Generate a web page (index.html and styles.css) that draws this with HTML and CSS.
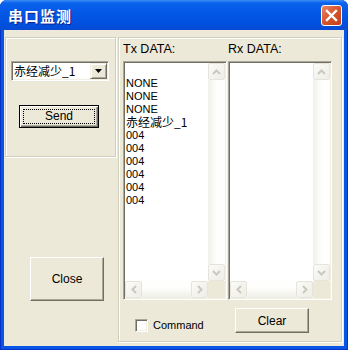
FILE: index.html
```html
<!DOCTYPE html>
<html lang="zh-CN">
<head>
    <meta charset="UTF-8">
    <title>串口监测</title>
    <link rel="stylesheet" href="styles.css">
</head>
<body>
    <div class="window">
        <div class="titlebar">
            <span class="title">串口监测</span>
            <span class="close-x">
                <svg width="19" height="19" viewBox="0 0 19 19"><path d="M5 5 L14 14 M14 5 L5 14" stroke="#fff" stroke-width="2.4" stroke-linecap="square"/></svg>
            </span>
        </div>
        <div class="client">
            <div class="left">
                <div class="group send-group">
                    <div class="combo">
                        <span class="combo-text">赤经减少_1</span>
                        <span class="combo-btn">
                            <svg width="7" height="4" viewBox="0 0 7 4"><path d="M0 0 H7 L3.5 4 Z" fill="#000"/></svg>
                        </span>
                    </div>
                    <button class="btn btn-default btn-send"><span class="focus">Send</span></button>
                </div>
                <button class="btn btn-close">Close</button>
            </div>
            <div class="group data-group">
                <div class="lists">
                    <div class="col">
                        <div class="label">Tx DATA:</div>
                        <div class="listbox">
                            <div class="items">
                                <div class="item">&nbsp;</div>
                                <div class="item">NONE</div>
                                <div class="item">NONE</div>
                                <div class="item">NONE</div>
                                <div class="item cjk">赤经减少_1</div>
                                <div class="item">004</div>
                                <div class="item">004</div>
                                <div class="item">004</div>
                                <div class="item">004</div>
                                <div class="item">004</div>
                                <div class="item">004</div>
                            </div>
                            <div class="vscroll">
                                <span class="sbtn"><svg width="9" height="6" viewBox="0 0 9 6"><path d="M1 5 L4.5 1.5 L8 5" fill="none" stroke="#cbc9bd" stroke-width="2"/></svg></span>
                                <span class="vtrack"></span>
                                <span class="sbtn"><svg width="9" height="6" viewBox="0 0 9 6"><path d="M1 1 L4.5 4.5 L8 1" fill="none" stroke="#cbc9bd" stroke-width="2"/></svg></span>
                            </div>
                            <div class="hscroll">
                                <span class="sbtn"><svg width="6" height="9" viewBox="0 0 6 9"><path d="M5 1 L1.5 4.5 L5 8" fill="none" stroke="#cbc9bd" stroke-width="2"/></svg></span>
                                <span class="htrack"></span>
                                <span class="sbtn"><svg width="6" height="9" viewBox="0 0 6 9"><path d="M1 1 L4.5 4.5 L1 8" fill="none" stroke="#cbc9bd" stroke-width="2"/></svg></span>
                            </div>
                            <div class="corner"></div>
                        </div>
                    </div>
                    <div class="col">
                        <div class="label">Rx DATA:</div>
                        <div class="listbox">
                            <div class="items"></div>
                            <div class="vscroll">
                                <span class="sbtn"><svg width="9" height="6" viewBox="0 0 9 6"><path d="M1 5 L4.5 1.5 L8 5" fill="none" stroke="#cbc9bd" stroke-width="2"/></svg></span>
                                <span class="vtrack"></span>
                                <span class="sbtn"><svg width="9" height="6" viewBox="0 0 9 6"><path d="M1 1 L4.5 4.5 L8 1" fill="none" stroke="#cbc9bd" stroke-width="2"/></svg></span>
                            </div>
                            <div class="hscroll">
                                <span class="sbtn"><svg width="6" height="9" viewBox="0 0 6 9"><path d="M5 1 L1.5 4.5 L5 8" fill="none" stroke="#cbc9bd" stroke-width="2"/></svg></span>
                                <span class="htrack"></span>
                                <span class="sbtn"><svg width="6" height="9" viewBox="0 0 6 9"><path d="M1 1 L4.5 4.5 L1 8" fill="none" stroke="#cbc9bd" stroke-width="2"/></svg></span>
                            </div>
                            <div class="corner"></div>
                        </div>
                    </div>
                </div>
                <div class="footer">
                    <span class="check"></span>
                    <span class="check-label">Command</span>
                    <button class="btn btn-clear">Clear</button>
                </div>
            </div>
        </div>
    </div>
</body>
</html>
```

FILE: styles.css
```css
body {
    margin: 0;
    background: #ffffff;
    font-family: "Liberation Sans", "Noto Sans CJK SC", sans-serif;
    overflow: hidden;
}
.window {
    width: 348px;
    height: 350px;
    display: flex;
    flex-direction: column;
    background: #0755e4;
    border-radius: 7px 7px 0 0;
    box-shadow: inset 1px 0 0 #0831c8, inset -1px 0 0 #0831c8, inset 0 -1px 0 #0831c8;
}
.titlebar {
    height: 30px;
    display: flex;
    align-items: center;
    padding: 0 6px 0 8px;
    border-radius: 7px 7px 0 0;
    background: linear-gradient(to bottom, #3d8ef5 0, #0a62ec 3px, #0358e6 45%, #004fdd 85%, #0a4ad2 100%);
}
.title {
    flex: 1;
    color: #fff;
    font-family: "Noto Sans CJK SC", sans-serif;
    font-size: 15px;
    font-weight: bold;
    letter-spacing: 1px;
    text-shadow: 1px 1px 0 #0b2187;
}
.close-x {
    width: 19px;
    height: 19px;
    border: 1px solid #fff;
    border-radius: 3px;
    background: linear-gradient(to bottom right, #e9866a, #d6532c 50%, #c1401b);
    display: flex;
}
.client {
    flex: 1;
    margin: 0 4px 4px;
    background: #ece9d8;
    display: flex;
    padding: 7px 0 4px 1px;
    font-size: 12px;
}
.group {
    box-sizing: border-box;
    border: 1px solid #d0d0bf;
    box-shadow: inset 1px 1px 0 #fff, 1px 1px 0 #fff;
}
.left {
    width: 111px;
    display: flex;
    flex-direction: column;
}
.send-group {
    height: 120px;
    padding: 23px 0 0 5px;
}
.combo {
    box-sizing: border-box;
    width: 98px;
    height: 20px;
    display: flex;
    align-items: center;
    background: #fff;
    border: 1px solid;
    border-color: #aca899 #fff #fff #aca899;
    box-shadow: inset 1px 1px 0 #716f64, inset -1px -1px 0 #f1efe2;
    padding: 1px 1px 1px 2px;
}
.combo-text {
    flex: 1;
    font-family: "Noto Sans CJK SC", sans-serif;
    font-size: 12px;
    line-height: 16px;
}
.combo-btn {
    box-sizing: border-box;
    width: 17px;
    height: 16px;
    display: flex;
    align-items: center;
    justify-content: center;
    background: #ece9d8;
    border: 1px solid;
    border-color: #f1efe2 #716f64 #716f64 #f1efe2;
    box-shadow: inset 1px 1px 0 #fff, inset -1px -1px 0 #aca899;
}
.btn {
    box-sizing: border-box;
    background: #ece9d8;
    font-family: "Liberation Sans", sans-serif;
    font-size: 12px;
    color: #000;
    padding: 0;
    border: 1px solid;
    border-color: #fff #716f64 #716f64 #fff;
    box-shadow: inset -1px -1px 0 #aca899;
}
.btn-default {
    border: 1px solid #000;
    box-shadow: inset 1px 1px 0 #fff, inset -1px -1px 0 #716f64, inset -2px -2px 0 #aca899;
}
.btn-send {
    width: 80px;
    height: 23px;
    margin: 24px 0 0 8px;
    padding: 3px;
    display: flex;
}
.focus {
    flex: 1;
    border: 1px dotted #000;
    line-height: 13px;
}
.btn-close {
    width: 74px;
    height: 44px;
    margin: 100px 0 0 25px;
}
.data-group {
    width: 224px;
    margin-left: 2px;
    display: flex;
    flex-direction: column;
    padding: 4px 0 0 4px;
}
.lists {
    display: flex;
    gap: 1px;
}
.label {
    font-size: 12.5px;
    line-height: 14px;
    height: 14px;
    margin-bottom: 5px;
}
.listbox {
    box-sizing: border-box;
    width: 104px;
    height: 239px;
    background: #fff;
    border: 1px solid;
    border-color: #aca899 #fff #fff #aca899;
    padding: 1px;
    box-shadow: inset 1px 1px 0 #716f64, inset -1px -1px 0 #f1efe2;
    display: grid;
    grid-template-columns: 1fr 17px;
    grid-template-rows: 1fr 17px;
}
.items {
    padding: 1px 0 0 1px;
    overflow: hidden;
}
.item {
    font-size: 11px;
    line-height: 13px;
    height: 13px;
    white-space: nowrap;
}
.item.cjk {
    font-family: "Noto Sans CJK SC", sans-serif;
    font-size: 12px;
    line-height: 12px;
}
.vscroll {
    display: flex;
    flex-direction: column;
}
.hscroll {
    display: flex;
}
.sbtn {
    box-sizing: border-box;
    width: 17px;
    height: 17px;
    display: flex;
    align-items: center;
    justify-content: center;
    background: linear-gradient(to bottom right, #fbfbf8, #eeede6);
    border: 1px solid #e6e4da;
    border-radius: 2px;
}
.vtrack {
    flex: 1;
    background: linear-gradient(to right, #f1f0ea, #fefefc 50%);
}
.htrack {
    flex: 1;
    background: linear-gradient(to bottom, #fefefc 40%, #eeede5);
}
.corner {
    background: #ece9d8;
}
.footer {
    display: flex;
    align-items: flex-start;
    padding-left: 12px;
}
.check {
    box-sizing: border-box;
    width: 13px;
    height: 13px;
    margin-top: 19px;
    background: #fff;
    border: 1px solid;
    border-color: #aca899 #fff #fff #aca899;
    box-shadow: inset 1px 1px 0 #716f64, inset -1px -1px 0 #f1efe2;
}
.check-label {
    font-size: 11px;
    line-height: 13px;
    margin: 19px 0 0 5px;
}
.btn-clear {
    width: 74px;
    height: 25px;
    margin: 8px 32px 0 auto;
}
```
